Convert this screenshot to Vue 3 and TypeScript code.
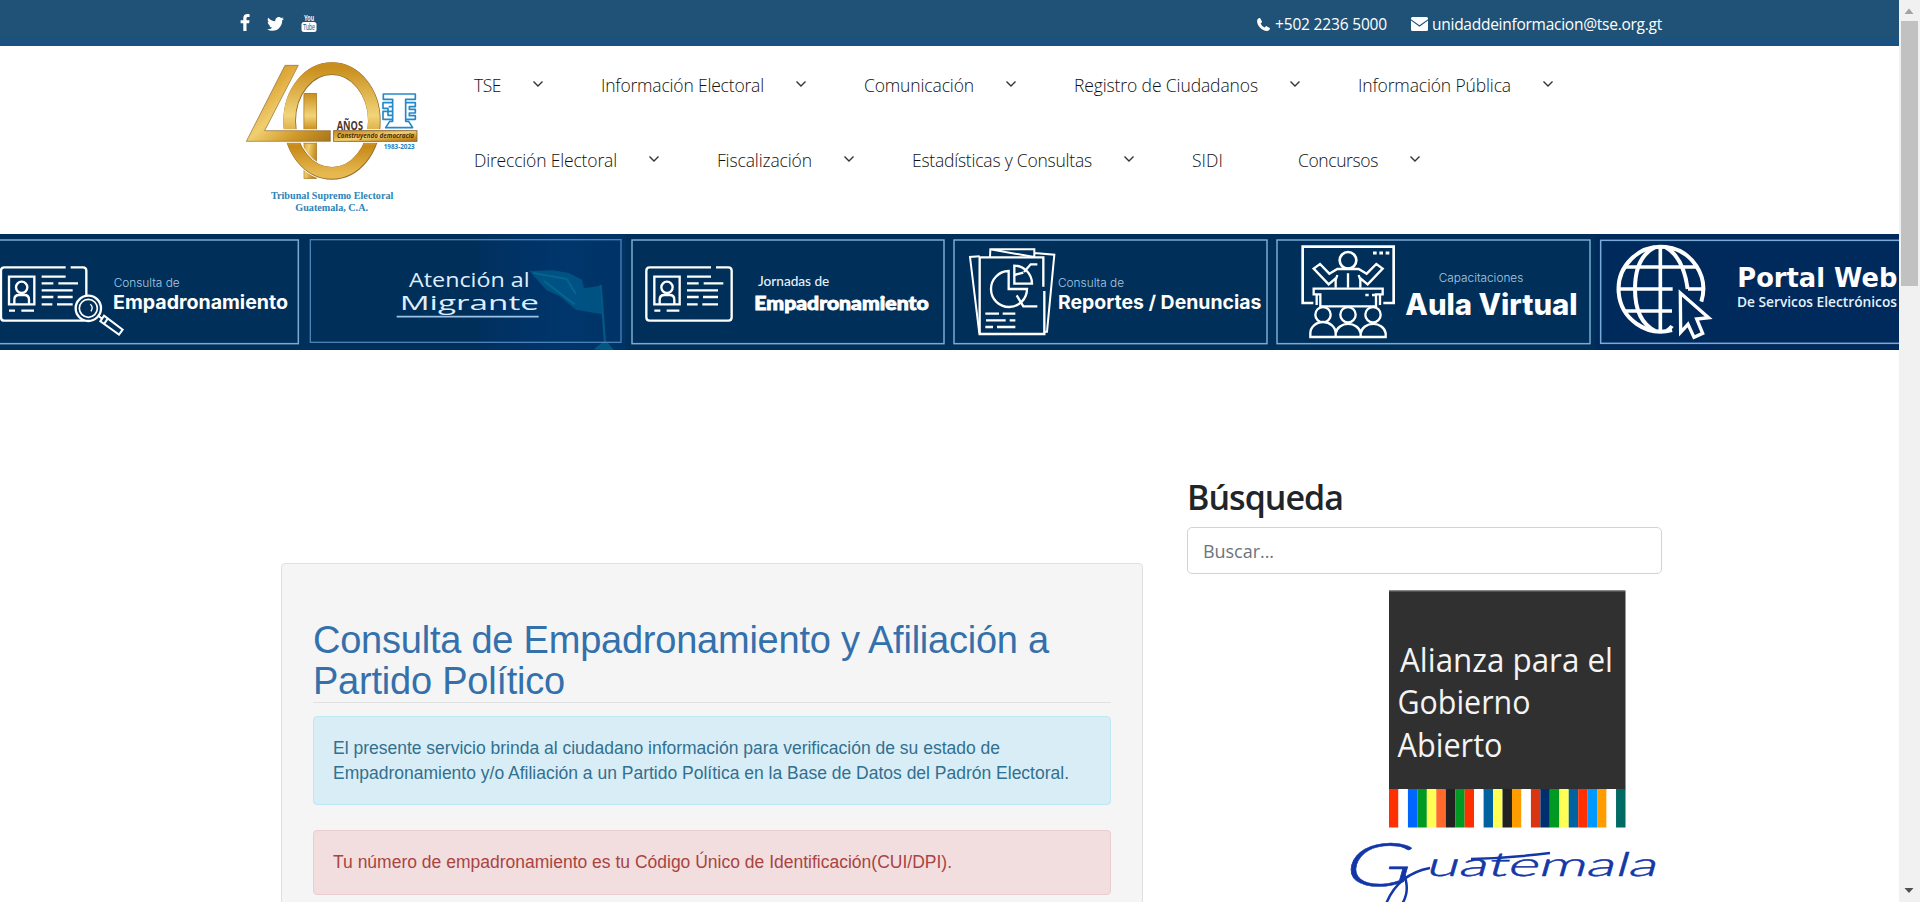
<script setup lang="ts">
interface NavItem {
  label: string
  width: number
  menu: boolean
}

const navRows: NavItem[][] = [
  [
    { label: 'TSE', width: 27, menu: true },
    { label: 'Información Electoral', width: 163, menu: true },
    { label: 'Comunicación', width: 110, menu: true },
    { label: 'Registro de Ciudadanos', width: 184, menu: true },
    { label: 'Información Pública', width: 153, menu: true },
  ],
  [
    { label: 'Dirección Electoral', width: 143, menu: true },
    { label: 'Fiscalización', width: 95, menu: true },
    { label: 'Estadísticas y Consultas', width: 180, menu: true },
    { label: 'SIDI', width: 31, menu: false },
    { label: 'Concursos', width: 80, menu: true },
  ],
]

const stripes: string[] = [
  '#ff2f00', '#ffffff', '#0066ff', '#009a22', '#ffff55', '#ff6a2c', '#222222', '#009a22', '#ff2f00',
  '#ffffff', '#0063a0', '#ffff55', '#222222', '#ff9c00', '#ffffff', '#d93510', '#002f70', '#009a22',
  '#ffff55', '#0063a0', '#ff2f00', '#0099ff', '#ff9c00', '#ffffff', '#006b62',
]

// Tracks a line of text so that it occupies the given width in pixels.
const vFit = {
  mounted(el: HTMLElement, binding: { value: number }) {
    const natural = el.getBoundingClientRect().width
    const count = (el.textContent ?? '').trim().length
    if (count > 0) {
      el.style.letterSpacing = `${(binding.value - natural) / count}px`
    }
  },
}
</script>

<template>
  <div class="page">
    <div class="content">
      <div class="topbar">
        <div class="social">
          <svg class="ic-f" viewBox="0 0 10 17" width="10" height="17"><path fill="#fff" d="M9.600.2v2.700H8c-1.200 0-1.500.6-1.500 1.500v1.900h3l-.4 3H6.500V17H3.300V9.300H.6v-3h2.700V4C3.300 1.400 4.900 0 7.300 0c1.100 0 2 .1 2.300.2z" /></svg>
          <svg class="ic-t" viewBox="0 0 24 20" width="17" height="14"><path fill="#fff" d="M24 2.400a9.800 9.800 0 0 1-2.800.8A4.900 4.900 0 0 0 23.300.4a9.800 9.800 0 0 1-3.100 1.200 4.900 4.900 0 0 0-8.400 4.500A14 14 0 0 1 1.700.9a4.900 4.900 0 0 0 1.500 6.600 4.900 4.900 0 0 1-2.200-.6v.1a4.900 4.900 0 0 0 3.900 4.800 4.900 4.900 0 0 1-2.200.1 4.900 4.900 0 0 0 4.600 3.400A9.900 9.900 0 0 1 0 17.400a13.900 13.900 0 0 0 7.500 2.200c9.100 0 14-7.500 14-14v-.6A10 10 0 0 0 24 2.400z" /></svg>
          <svg class="ic-y" viewBox="0 0 16 20" width="16" height="20">
            <text x="3" y="8" font-size="9" font-weight="700" fill="#fff" textLength="10" lengthAdjust="spacingAndGlyphs">You</text>
            <rect x="0.500" y="9" width="15" height="10" rx="2.500" fill="#fff" />
            <text x="2" y="17" font-size="8.500" fill="#1f5276" textLength="12" lengthAdjust="spacingAndGlyphs">Tube</text>
          </svg>
        </div>
        <div class="contact">
          <svg viewBox="0 0 13 13" width="13" height="13"><path fill="#fff" d="M3.200.3 4.900 3.500c.2.400.1.600-.2.900l-1 1c.8 1.800 2.200 3.200 4 4l1-1c.3-.3.600-.4.900-.2l3.100 1.700c.3.200.3.400.2.800-.4 1.400-1.600 2.300-3 2.200C5 12.700.2 7.800.1 3.200 0 1.700.9.500 2.300.1c.500-.1.700-.1.900.2z" /></svg>
          <span v-fit="112" class="phone">+502 2236 5000</span>
          <svg viewBox="0 0 17 14" width="17" height="14"><path fill="#fff" d="M1.500 0h14A1.500 1.500 0 0 1 17 1.500v.7L8.500 8.300 0 2.200v-.7A1.500 1.500 0 0 1 1.500 0zM0 3.500l8.500 6.200L17 3.500v9a1.500 1.500 0 0 1-1.500 1.500h-14A1.500 1.500 0 0 1 0 12.500z" /></svg>
          <span v-fit="230" class="mail">unidaddeinformacion@tse.org.gt</span>
        </div>
      </div>

      <header class="header">
        <svg class="logo" viewBox="60 170 560 480" width="186.667" height="160">
          <defs>
            <linearGradient id="gold" x1="0" y1="0" x2="1" y2="1">
              <stop offset="0" stop-color="#c08a1c" /><stop offset=".3" stop-color="#e0aa3c" />
              <stop offset=".5" stop-color="#f0cf70" /><stop offset=".75" stop-color="#d09a2a" /><stop offset="1" stop-color="#a8741a" />
            </linearGradient>
            <linearGradient id="goldV" x1="0" y1="0" x2="0" y2="1">
              <stop offset="0" stop-color="#c98f1e" /><stop offset=".45" stop-color="#f2d479" />
              <stop offset=".75" stop-color="#c78a17" /><stop offset="1" stop-color="#e5b850" />
            </linearGradient>
          </defs>
          <rect x="252" y="279" width="38" height="256" fill="url(#gold)" stroke="#a8762a" stroke-width="2" />
          <ellipse cx="336" cy="362" rx="127" ry="157" fill="none" stroke="#fff" stroke-width="44" />
          <ellipse cx="336" cy="362" rx="127" ry="157" fill="none" stroke="#94692a" stroke-width="38" />
          <ellipse cx="335" cy="361" rx="127" ry="157" fill="none" stroke="url(#goldV)" stroke-width="35" />
          <rect x="252" y="279" width="37" height="150" fill="url(#goldV)" stroke="#a8762a" stroke-width="1.500" />
          <path d="M195 195h40L134 391h197v32H79z" fill="none" stroke="#fff" stroke-width="9" />
          <path d="M195 195h40L134 391h197v32H79z" fill="url(#gold)" stroke="#8d6736" stroke-width="2" />
          <rect x="341" y="391" width="250" height="32" fill="url(#gold)" stroke="#fff" stroke-width="9" />
          <rect x="341" y="391" width="250" height="32" fill="url(#gold)" stroke="#806031" stroke-width="2.500" />
          <text x="350" y="388" class="anos" textLength="79" lengthAdjust="spacingAndGlyphs">AÑOS</text>
          <text x="351" y="413" class="motto" textLength="231" lengthAdjust="spacingAndGlyphs">Construyendo democracia</text>
          <g fill="none" stroke="#2489ca" stroke-width="5" stroke-linejoin="round">
            <path d="M490 281h96v16h-29v66h9l12 19h-81l12-19h9v-66h-28z" />
            <path d="M518 307h-29v17h15v9h-15v24h29M518 319h-12M518 345h-14v-12h14" />
            <path d="M557 307h29v12h-18v8h18v11h-18v8h18v11h-29" />
          </g>
          <text x="491" y="445" class="years" textLength="93" lengthAdjust="spacingAndGlyphs">1983-2023</text>
          <text x="153" y="595" class="org" textLength="367" lengthAdjust="spacingAndGlyphs">Tribunal Supremo Electoral</text>
          <text x="226" y="632" class="org" textLength="218" lengthAdjust="spacingAndGlyphs">Guatemala, C.A.</text>
        </svg>
        <nav class="nav">
          <div v-for="(row, r) in navRows" :key="r" class="nav-row">
            <a v-for="item in row" :key="item.label" class="nav-item" :class="{ menu: item.menu }">
              <span class="nav-slot" :style="{ width: item.width + 'px' }"><span v-fit="item.width" class="nav-label">{{ item.label }}</span></span>
              <svg v-if="item.menu" viewBox="0 0 12 8" width="12" height="8"><path d="M1.500 1.500 6 6l4.500-4.500" fill="none" stroke="#333" stroke-width="1.400" /></svg>
            </a>
          </div>
        </nav>
      </header>

      <div class="strip">
        <svg class="slide" viewBox="-60 27 969 348">
          <defs>
            <g id="idcard" fill="none" stroke="#fff" stroke-width="7" stroke-linecap="round">
              <path d="M197 127H13Q3 127 3 137V277Q3 287 13 287H249Q259 287 259 277V137Q259 127 249 127H212" stroke-linecap="butt" />
              <path d="M27 155H103V238H27z" />
              <circle cx="65" cy="187" r="17" />
              <path d="M43 236V224Q43 210 57 210H73Q87 210 87 224V236" />
              <path d="M27 257H45M64 257H102M125 155H197M125 175H160M175 175H234M125 196H218M125 216H160M173 216H218M125 238H157M171 238H218" stroke-linecap="butt" />
            </g>
          </defs>
          <rect class="frame" x="-30" y="45" width="925" height="311" />
          <use href="#idcard" />
          <g fill="none" stroke="#fff">
            <circle cx="265" cy="250" r="38" fill="#003059" stroke-width="7" />
            <circle cx="265" cy="250" r="27" stroke-width="5" />
            <path d="M271 238Q281 246 273 259" stroke-width="4" />
            <path d="M295 272 307 282M312 272 368 314 357 329 301 289zM323 281 313 296" stroke-width="6" />
          </g>
          <text x="341" y="187" class="thin" font-size="34" textLength="198" lengthAdjust="spacingAndGlyphs">Consulta de</text>
          <text x="339" y="253" class="bold" font-size="56" textLength="525" lengthAdjust="spacingAndGlyphs">Empadronamiento</text>
        </svg>

        <svg class="slide" viewBox="909 27 969 348">
          <defs>
            <linearGradient id="night" x1="0" y1="0" x2="1" y2="0">
              <stop offset="0" stop-color="#00305f" /><stop offset=".6" stop-color="#00366d" /><stop offset="1" stop-color="#003365" />
            </linearGradient>
          </defs>
          <rect x="1438" y="27" width="440" height="348" fill="url(#night)" />
          <path d="M1588 138 1660 136 1706 144 1746 164 1752 190 1802 182 1806 268 1728 254 1680 214 1640 196z" fill="#005c8c" opacity=".75" />
          <path d="M1600 144 1700 162 1728 208M1632 168 1724 238" stroke="#08779c" stroke-width="6" fill="none" opacity=".5" />
          <path d="M1802 180 1815 352M1790 370 1816 350 1836 374z" stroke="#045783" stroke-width="7" fill="#045783" />
          <rect class="frame dim" x="931" y="44" width="932" height="308" />
          <text x="1227" y="185" class="hum" font-size="62" textLength="362" lengthAdjust="spacingAndGlyphs">Atención al</text>
          <text x="1199" y="255" class="hum" font-size="62" textLength="418" lengthAdjust="spacingAndGlyphs">Migrante</text>
          <path d="M1190 275H1616" stroke="#9cc3e6" stroke-width="5" />
        </svg>

        <svg class="slide" viewBox="498 27 969 348">
          <rect class="frame" x="516" y="45" width="936" height="311" />
          <use href="#idcard" x="556" />
          <text x="894" y="183" class="jor" font-size="42" textLength="214" lengthAdjust="spacingAndGlyphs">Jornadas de</text>
          <text x="883" y="255" class="black" font-size="56" textLength="523" lengthAdjust="spacingAndGlyphs">Empadronamiento</text>
        </svg>

        <svg class="slide" viewBox="27 27 969 348">
          <rect class="frame" x="42" y="45" width="939" height="311" />
          <g fill="none" stroke="#fff" stroke-width="7">
            <path d="M310 185V97H119V327H313V198" />
            <path d="M119 94 90 96 118 325M283 84 343 89 321 320H314M150 96 151 73 283 96M151 73 283 73V96" stroke-width="6" />
            <path d="M206 138A54 54 0 1 0 261 192H206z" />
            <path d="M223 122A54 54 0 0 1 276 176H223z" />
            <path d="M252 141 272 118H292M230 211 250 244H292M223 150 250 143" />
            <path d="M136 266H177M188 266H226M138 286H197M209 286H226M136 306H159M171 306H226" />
          </g>
          <text x="354" y="187" class="thin" font-size="34" textLength="198" lengthAdjust="spacingAndGlyphs">Consulta de</text>
          <text x="354" y="253" class="bold" font-size="56" textLength="610" lengthAdjust="spacingAndGlyphs">Reportes / Denuncias</text>
        </svg>

        <svg class="slide" viewBox="996 27 969 348">
          <rect class="frame" x="1011" y="45" width="939" height="311" />
          <g fill="none" stroke="#fff" stroke-width="8">
            <path d="M1120 234H1088V65H1361V234H1330" />
            <path d="M1299 84H1310M1318 84H1329M1337 84H1348" stroke-width="9" />
            <circle cx="1224" cy="106" r="25" />
            <path d="M1187 188V160L1166 178 1121 131 1140 117 1168 146 1192 132H1256L1280 146 1309 117 1328 131 1283 178 1261 160V188M1224 145V188M1192 150 1186 168M1256 150 1262 168" stroke-width="7" />
            <path d="M1121 191H1328V208H1308V244H1141V208H1121zM1276 210H1286M1296 210H1308M1130 208V240M1320 208V240" stroke-width="7" />
            <g fill="#003059" stroke-width="7">
              <circle cx="1149" cy="269" r="23" /><circle cx="1224" cy="269" r="23" /><circle cx="1299" cy="269" r="23" />
              <path d="M1111 336V325A38 34 0 0 1 1187 325V336zM1187 336V325A38 34 0 0 1 1262 325V336zM1262 336V325A38 34 0 0 1 1337 325V336z" />
            </g>
          </g>
          <text x="1496" y="171" class="thin" font-size="34" textLength="254" lengthAdjust="spacingAndGlyphs">Capacitaciones</text>
          <text x="1396" y="271" class="bold heavy" font-size="88" textLength="517" lengthAdjust="spacingAndGlyphs">Aula Virtual</text>
        </svg>

        <svg class="slide" viewBox="525 27 969 348">
          <rect x="525" y="27" width="969" height="348" fill="#002a5b" />
          <rect class="frame" x="542" y="46" width="940" height="309" />
          <g fill="none" stroke="#fff" stroke-width="12">
            <path d="M756 315A127 127 0 1 1 844 230" />
            <path d="M721 64V320M594 192H758M804 192H848M612 126H832M612 258H756" stroke-width="11" />
            <path d="M706 66Q645 96 645 192T706 318M736 66Q790 96 803 192M740 318Q750 312 756 303" />
            <path d="M781 204 866 278 830 282 848 325 822 337 804 298 782 322z" stroke-width="10" fill="#002a5b" />
          </g>
          <text x="952" y="187" class="portal" font-size="80" textLength="480" lengthAdjust="spacingAndGlyphs">Portal Web</text>
          <text x="951" y="246" class="serv" font-size="42" textLength="480" lengthAdjust="spacingAndGlyphs">De Servicos Electrónicos</text>
        </svg>
      </div>

      <main class="main">
        <section class="well">
          <h1><span v-fit="736">Consulta de Empadronamiento y Afiliación a</span><br><span v-fit="252">Partido Político</span></h1>
          <div class="alert info">
            <span v-fit="667">El presente servicio brinda al ciudadano información para verificación de su estado de</span><br>
            <span v-fit="736">Empadronamiento y/o Afiliación a un Partido Política en la Base de Datos del Padrón Electoral.</span>
          </div>
          <div class="alert danger"><span v-fit="619">Tu número de empadronamiento es tu Código Único de Identificación(CUI/DPI).</span></div>
        </section>

        <aside class="side">
          <h3><span v-fit="156">Búsqueda</span></h3>
          <div class="search"><span v-fit="71">Buscar...</span></div>
          <svg class="alliance" viewBox="1345 590 316 330" width="316" height="330">
            <rect x="1389" y="590.500" width="236.500" height="199" fill="#303030" />
            <path d="M1389 591H1625" stroke="#777" />
            <text x="1400" y="672" class="ogp" textLength="213" lengthAdjust="spacingAndGlyphs">Alianza para el</text>
            <text x="1397.500" y="714" class="ogp" textLength="133" lengthAdjust="spacingAndGlyphs">Gobierno</text>
            <text x="1397.500" y="757" class="ogp" textLength="105" lengthAdjust="spacingAndGlyphs">Abierto</text>
            <rect v-for="(c, i) in stripes" :key="i" :x="1389 + i * 9.460" y="789" width="9.460" height="38.500" :fill="c" />
            <g class="script" transform="translate(1345 876) skewX(-16)">
              <text x="-2" y="10" font-size="60" textLength="68" lengthAdjust="spacingAndGlyphs">G</text>
              <text x="80" y="0" font-size="33" textLength="231" lengthAdjust="spacingAndGlyphs">uatemala</text>
            </g>
            <path d="M1403 872Q1411 890 1402 904M1430 868Q1398 874 1386 904M1471 859Q1510 858 1550 853" fill="none" stroke="#1437a8" stroke-width="2.500" />
          </svg>
        </aside>
      </main>
    </div>

    <div class="scrollbar">
      <svg viewBox="0 0 20 21" width="20" height="21"><path d="M5.500 14 10 8.500 14.500 14z" fill="#a3a3a3" /></svg>
      <div class="thumb"></div>
      <svg class="down" viewBox="0 0 20 21" width="20" height="21"><path d="M5.500 7 10 12 14.500 7z" fill="#505050" /></svg>
    </div>
  </div>
</template>

<style>
html,
body {
  margin: 0;
  overflow: hidden;
}
</style>

<style scoped>
.page {
  display: flex;
  width: 1920px;
  height: 902px;
  overflow: hidden;
  background: #fff;
  font-family: "Open Sans", "Noto Sans", sans-serif;
  color: #212529;
}
.page span { white-space: nowrap; }
.content { width: 1899px; height: 902px; overflow: hidden; flex: none; }

.topbar {
  box-sizing: border-box;
  height: 46px;
  padding: 0 237px 0 240px;
  display: flex;
  justify-content: space-between;
  background: linear-gradient(#1f5276 0 37px, #1a5181 39px 44px, #1c5078 46px);
  color: #fff;
  font-size: 15.500px;
}
.social { display: flex; align-items: flex-start; padding-top: 14px; }
.ic-t { margin: 3px 17px 0 17px; }
.ic-y { margin-top: -1px; overflow: visible; font-family: "Liberation Sans", sans-serif; }
.contact { display: flex; align-items: center; height: 48px; }
.phone { display: inline-block; margin: 0 24px 0 5px; }
.mail { display: inline-block; margin-left: 4px; }

.header { display: flex; height: 188px; }
.logo { flex: none; margin: 10.700px 47.300px 0 240px; }
.anos { font: 700 37px "Open Sans", sans-serif; fill: #50352c; }
.motto { font: italic 700 19px "Open Sans", sans-serif; fill: #4a2d12; }
.years { font: 700 19px "Open Sans", sans-serif; fill: #2382bd; }
.org { font: 700 34px "Liberation Serif", serif; fill: #2c84b8; }
.nav { padding-top: 1px; }
.nav-row { display: flex; height: 75px; align-items: center; }
.nav-item { display: flex; align-items: center; font-size: 17.500px; font-weight: 300; line-height: 24px; margin-right: 75px; color: #111; }
.nav-item.menu { margin-right: 57px; }
.nav-slot { display: block; }
.nav-label { display: inline-block; }
.nav-item svg { margin: -2px 0 0 31px; }

.strip { display: flex; height: 116px; margin-left: -20px; background: #003059; }
.slide { flex: none; width: 323px; height: 116px; display: block; }
.frame { fill: none; stroke: #79abd6; stroke-width: 4.500; }
.frame.dim { stroke: #4d80b4; stroke-width: 4; }
.slide text { fill: #fff; }
.slide .thin { font-family: Inter, sans-serif; font-weight: 300; fill: #a9c9e2; }
.slide .bold { font-family: Inter, sans-serif; font-weight: 700; }
.slide .heavy { font-weight: 800; }
.slide .black { font-family: Lato, sans-serif; font-weight: 900; stroke: #fff; stroke-width: 2.500; }
.slide .hum { font-family: "Open Sans", sans-serif; font-weight: 500; fill: #deeeff; }
.slide .jor { font-family: Lato, sans-serif; font-weight: 500; fill: #e6f1fb; }
.slide .portal { font-family: "DejaVu Sans", sans-serif; font-weight: 700; }
.slide .serv { font-family: "Open Sans", sans-serif; font-weight: 600; fill: #e6f1fb; }

.main { display: flex; align-items: flex-start; }
.well {
  box-sizing: border-box;
  width: 862px;
  height: 420px;
  margin: 213px 44px 0 281px;
  padding: 56px 31px 0;
  background: #f5f5f5;
  border: 1px solid #e0e0e0;
  border-radius: 4px;
  font-family: "Liberation Sans", sans-serif;
}
h1 {
  margin: 0 0 13px;
  padding-bottom: 0;
  height: 82px;
  border-bottom: 1px solid #e0e0e0;
  color: #3470ab;
  font-size: 38px;
  font-weight: 400;
  line-height: 41px;
}
.alert { box-sizing: border-box; padding: 19px; border: 1px solid; border-radius: 4px; font-size: 17.500px; line-height: 25px; }
.info { height: 89px; margin-bottom: 25px; background: #d9edf7; border-color: #bce8f1; color: #31708f; }
.danger { height: 65px; background: #f2dede; border-color: #ebccd1; color: #a94442; }

.side { width: 475px; padding-top: 125px; }
h3 { margin: 0; height: 52px; font-size: 34px; font-weight: 600; line-height: 44px; }
.search {
  box-sizing: border-box;
  height: 47px;
  padding: 1px 15px 0;
  border: 1px solid #ced4da;
  border-radius: 5px;
  color: #6c757d;
  font-size: 18px;
  line-height: 45px;
}
.alliance { display: block; margin: 16px 0 0 158px; }
.ogp { font: 400 32px "Open Sans", sans-serif; fill: #f4f4f4; }
.script text { font-family: Lato, "Open Sans", sans-serif; font-weight: 300; fill: #1437a8; stroke: #1437a8; stroke-width: 0.500; }

.scrollbar { display: flex; flex-direction: column; width: 21px; background: #f1f1f1; }
.thumb { width: 17px; height: 265px; margin-left: 2px; background: #c1c1c1; }
.down { margin-top: auto; }
</style>
